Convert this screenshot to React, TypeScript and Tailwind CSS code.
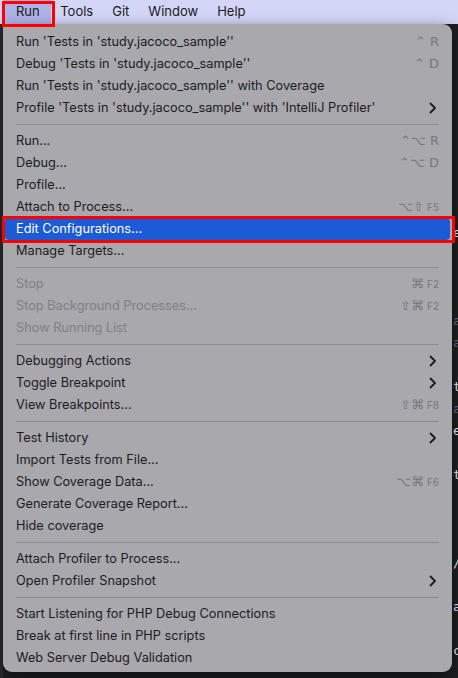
import React from 'react';

type Item =
  | { kind: 'sep' }
  | {
      kind: 'item';
      label: string;
      keys?: string;
      fkey?: string;
      sub?: boolean;
      disabled?: boolean;
      active?: boolean;
    };

const items: Item[] = [
  { kind: 'item', label: "Run 'Tests in 'study.jacoco_sample''", keys: '⌃ R' },
  { kind: 'item', label: "Debug 'Tests in 'study.jacoco_sample''", keys: '⌃ D' },
  { kind: 'item', label: "Run 'Tests in 'study.jacoco_sample'' with Coverage" },
  { kind: 'item', label: "Profile 'Tests in 'study.jacoco_sample'' with 'IntelliJ Profiler'", sub: true },
  { kind: 'sep' },
  { kind: 'item', label: 'Run...', keys: '⌃⌥ R' },
  { kind: 'item', label: 'Debug...', keys: '⌃⌥ D' },
  { kind: 'item', label: 'Profile...' },
  { kind: 'item', label: 'Attach to Process...', keys: '⌥⇧', fkey: 'F5' },
  { kind: 'item', label: 'Edit Configurations...', active: true },
  { kind: 'item', label: 'Manage Targets...' },
  { kind: 'sep' },
  { kind: 'item', label: 'Stop', keys: '⌘', fkey: 'F2', disabled: true },
  { kind: 'item', label: 'Stop Background Processes...', keys: '⇧⌘', fkey: 'F2', disabled: true },
  { kind: 'item', label: 'Show Running List', disabled: true },
  { kind: 'sep' },
  { kind: 'item', label: 'Debugging Actions', sub: true },
  { kind: 'item', label: 'Toggle Breakpoint', sub: true },
  { kind: 'item', label: 'View Breakpoints...', keys: '⇧⌘', fkey: 'F8' },
  { kind: 'sep' },
  { kind: 'item', label: 'Test History', sub: true },
  { kind: 'item', label: 'Import Tests from File...' },
  { kind: 'item', label: 'Show Coverage Data...', keys: '⌥⌘', fkey: 'F6' },
  { kind: 'item', label: 'Generate Coverage Report...' },
  { kind: 'item', label: 'Hide coverage' },
  { kind: 'sep' },
  { kind: 'item', label: 'Attach Profiler to Process...' },
  { kind: 'item', label: 'Open Profiler Snapshot', sub: true },
  { kind: 'sep' },
  { kind: 'item', label: 'Start Listening for PHP Debug Connections' },
  { kind: 'item', label: 'Break at first line in PHP scripts' },
  { kind: 'item', label: 'Web Server Debug Validation' },
];

// glimpses of the editor behind the menu, one per 22px line
const editorLines = [
  '', '', '', '', '', '', '', '', '', 'e', '', '', '', '·', '·', '', 't', '·', 'e', '', 't', '', '', '', '/', '', 'a', '', 'c',
];

const Chevron = () => (
  <svg width="8" height="12" viewBox="0 0 8 12" className="mr-[2px]">
    <path d="M1.5 1.5 L6 6 L1.5 10.5" fill="none" stroke="#1c1c1e" strokeWidth="1.8" strokeLinecap="round" strokeLinejoin="round" />
  </svg>
);

const menuBar = ['Run', 'Tools', 'Git', 'Window', 'Help'];

export default function App() {
  return (
    <div className="relative w-[458px] h-[678px] overflow-hidden bg-[#1e1f22] font-['Inter',sans-serif] text-[12.75px]">
      {/* Menu bar */}
      <div className="h-[24px] bg-[#d3d5f6] flex items-center text-[#1a1a1a] text-[13px]">
        <div className="flex items-center h-full">
          {menuBar.map((m, i) => (
            <span
              key={m}
              className={
                i === 0
                  ? 'h-full flex items-center pl-[13px] pr-[11px] ml-[3px] bg-[#aeb3e6]'
                  : 'h-full flex items-center px-[9.5px]'
              }
            >
              {m}
            </span>
          ))}
        </div>
      </div>

      <div className="flex h-[654px]">
        <div className="w-[3px] bg-[#2a2b2e]" />
        {/* Dropdown panel */}
        <div className="w-[449px] self-start bg-[#a8a8ad] rounded-b-[9px] rounded-tr-[9px] pt-[7px] pb-[3px] shadow-[0_4px_14px_rgba(0,0,0,0.5)]">
          {items.map((it, idx) =>
            it.kind === 'sep' ? (
              <div key={idx} className="h-[11px] flex items-center pl-[13px] pr-[13px]">
                <div className="h-px w-full bg-[#8d8d92]" />
              </div>
            ) : (
              <div key={idx} className="h-[22px] px-[2px] flex">
                <div
                  className={
                    'flex-1 flex items-center justify-between pl-[11px] pr-[11px] rounded-[4px] ' +
                    (it.active ? 'bg-[#1b5bd5] text-white' : it.disabled ? 'text-[#808085]' : 'text-[#1c1c1e]')
                  }
                >
                  <span className="whitespace-nowrap">{it.label}</span>
                  {it.sub ? (
                    <Chevron />
                  ) : it.keys ? (
                    <span className="flex items-baseline gap-[3px] text-[#77777c] font-['DejaVu_Sans',sans-serif]">
                      <span className="text-[13px]">{it.keys}</span>
                      {it.fkey && <span className="text-[10px] font-['Inter',sans-serif]">{it.fkey}</span>}
                    </span>
                  ) : null}
                </div>
              </div>
            )
          )}
        </div>
        {/* editor behind the menu */}
        <div className="flex-1 flex flex-col pl-[1px] overflow-hidden font-['DejaVu_Sans_Mono',monospace] text-[13px] text-[#cfd1d6]">
          {editorLines.map((l, i) => (
            <div key={i} className={'h-[22px] leading-[22px] ' + (l === '·' ? 'text-[#5c5e63]' : '')}>
              {l === '·' ? 'a' : l}
            </div>
          ))}
        </div>
      </div>

      {/* annotation boxes */}
      <div className="absolute left-[2px] top-[1px] w-[53px] h-[26px] border-[3px] border-[#ff0000]" />
      <div className="absolute left-[2px] top-[216px] w-[453px] h-[27px] border-[3px] border-[#ff0000]" />
    </div>
  );
}
